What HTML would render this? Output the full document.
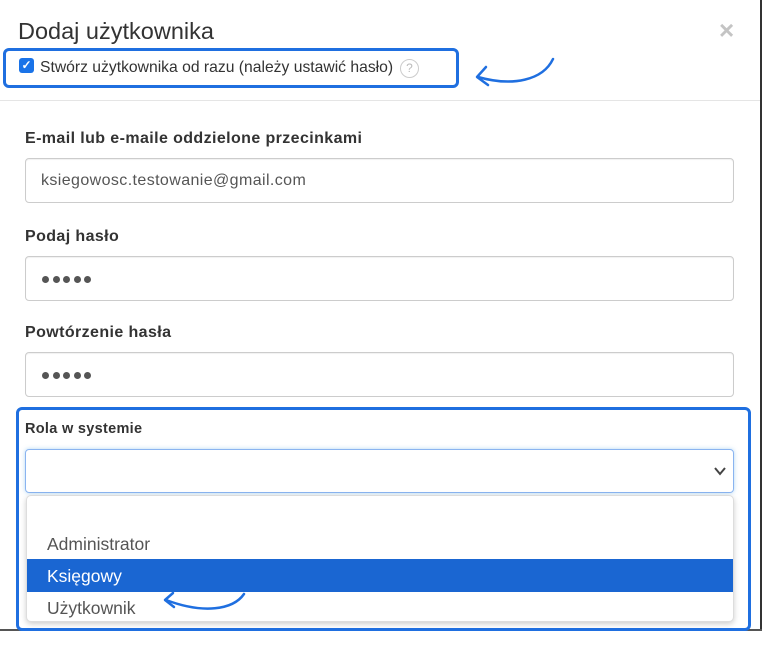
<!DOCTYPE html>
<html><head><meta charset="utf-8"><style>
*{box-sizing:border-box;margin:0;padding:0}
body{width:765px;height:645px;background:#fff;font-family:"Liberation Sans",sans-serif;color:#333;position:relative;overflow:hidden}
.a{position:absolute}
.lbl{position:absolute;left:25px;font-weight:bold;font-size:16px;letter-spacing:0.4px;color:#333}
.inp{position:absolute;left:25px;width:709px;height:45px;border:1px solid #ccc;border-radius:4px;box-shadow:inset 0 1px 1px rgba(0,0,0,.06)}
.dots{position:absolute;left:16px;top:19px;height:7px;width:60px;display:flex;gap:3.5px}
.dots i{display:block;width:7px;height:7px;border-radius:50%;background:#555}
</style></head><body>
<div class="a" style="left:760px;top:0;width:2px;height:630px;background:#333"></div>
<div class="a" style="left:0;top:629px;width:762px;height:2px;background:#555"></div>
<div class="a" style="left:18px;top:18px;font-size:23.5px;color:#333">Dodaj użytkownika</div>
<div class="a" style="left:719px;top:15px;font-size:26px;color:#c4c4c4;font-weight:bold">×</div>
<div class="a" style="left:3px;top:48px;width:456px;height:40px;border:3px solid #1f6fe0;border-radius:6px"></div>
<div class="a" style="left:19px;top:58px;width:15px;height:15px;background:#1a73e8;border-radius:3px;color:#fff;font-size:12px;line-height:15px;text-align:center;font-weight:bold">✓</div>
<div class="a" style="left:40px;top:59px;font-size:15.7px;color:#333">Stwórz użytkownika od razu (należy ustawić hasło)</div>
<div class="a" style="left:400px;top:59px;width:19px;height:19px;border:1px solid #ccc;border-radius:50%;color:#bbb;font-size:12px;text-align:center;line-height:17px">?</div>
<svg class="a" style="left:468px;top:55px" width="90" height="36"><path d="M85 4 C75 25 45 32 10 22" fill="none" stroke="#1f6fe0" stroke-width="2.5" stroke-linecap="round"/><path d="M18 12 L9 22 L20 30" fill="none" stroke="#1f6fe0" stroke-width="2.5" stroke-linecap="round" stroke-linejoin="round"/></svg>
<div class="a" style="left:0;top:100px;width:760px;height:1px;background:#e5e5e5"></div>
<div class="lbl" style="top:130px">E-mail lub e-maile oddzielone przecinkami</div>
<div class="inp" style="top:158px"><div class="a" style="left:15px;top:13px;font-size:16px;letter-spacing:0.4px;color:#555">ksiegowosc.testowanie@gmail.com</div></div>
<div class="lbl" style="top:228px">Podaj hasło</div>
<div class="inp" style="top:256px"><div class="dots"><i></i><i></i><i></i><i></i><i></i></div></div>
<div class="lbl" style="top:324px">Powtórzenie hasła</div>
<div class="inp" style="top:352px"><div class="dots"><i></i><i></i><i></i><i></i><i></i></div></div>
<div class="a" style="left:16px;top:407px;width:735px;height:224px;border:3px solid #1f6fe0;border-radius:6px;z-index:5"></div>
<div class="lbl" style="top:421px;font-size:14.5px;letter-spacing:0.3px">Rola w systemie</div>
<div class="inp" style="top:449px;height:44px;border-color:#8ab4f0;box-shadow:0 0 4px rgba(102,175,233,.5)"><svg class="a" style="left:688px;top:17px" width="12" height="9"><path d="M1 1 L6 7 L11 1" fill="none" stroke="#444" stroke-width="2"/></svg></div>
<div class="a" style="left:26px;top:495px;width:708px;height:127px;background:#fff;border:1px solid #ddd;border-radius:5px;box-shadow:0 2px 6px rgba(0,0,0,.2);overflow:hidden">
<div class="a" style="left:20px;top:38px;font-size:17.5px;color:#555">Administrator</div>
<div class="a" style="left:0;top:63px;width:708px;height:33px;background:#1a66d2"></div>
<div class="a" style="left:20px;top:70px;font-size:17.5px;color:#fff">Księgowy</div>
<div class="a" style="left:20px;top:102px;font-size:17.5px;color:#555">Użytkownik</div>
</div>
<svg class="a" style="left:158px;top:588px;z-index:6" width="92" height="28"><path d="M86 6 C75 22 45 26 8 12" fill="none" stroke="#1f6fe0" stroke-width="2.5" stroke-linecap="round"/><path d="M15 5 L7 12 L16 19" fill="none" stroke="#1f6fe0" stroke-width="2.5" stroke-linecap="round" stroke-linejoin="round"/></svg>
</body></html>
